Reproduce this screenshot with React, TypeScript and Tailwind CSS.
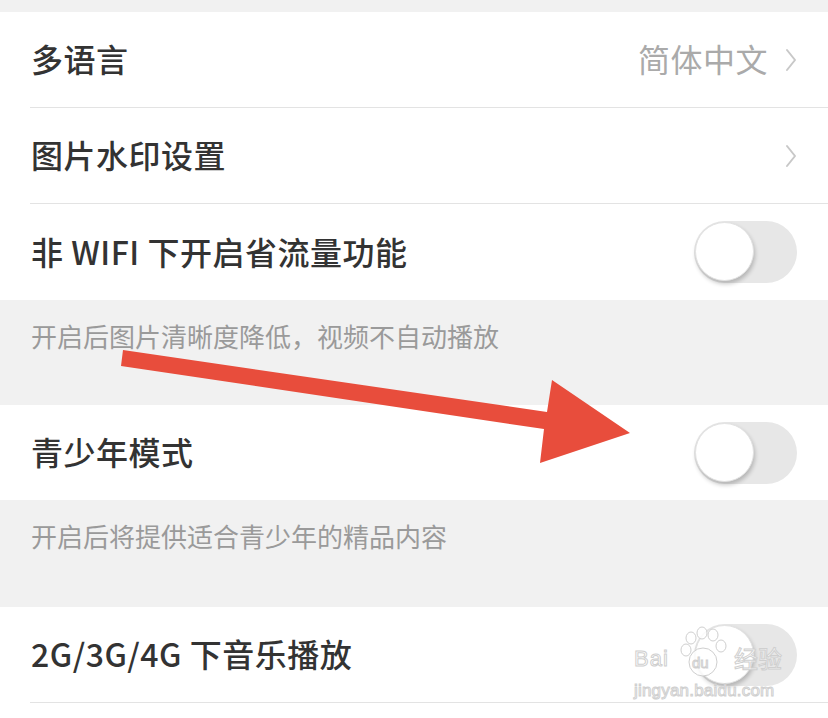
import type { ReactNode } from 'react'

const font = "font-['PingFang_SC','Noto_Sans_CJK_SC','Noto_Sans',sans-serif]"

function Toggle() {
  return (
    <div className="relative h-[62px] w-[103px] rounded-full bg-[#e7e7e7]">
      <div className="absolute left-[1px] top-[1px] h-[59px] w-[59px] rounded-full border border-[#e2e2e2] bg-white shadow-[1px_3px_4px_rgba(0,0,0,0.22)]" />
    </div>
  )
}

function Chevron() {
  return (
    <svg width="12" height="24" viewBox="0 0 12 24" className="ml-[17px]" aria-hidden>
      <path d="M2 2 L10 12 L2 22" fill="none" stroke="#c8c8c8" strokeWidth="2" strokeLinecap="round" strokeLinejoin="round" />
    </svg>
  )
}

// heights include the 1px divider (border-box)
function Row({
  label,
  right,
  divider = true,
  height = 'h-[96px]',
}: {
  label: string
  right?: ReactNode
  divider?: boolean
  height?: string
}) {
  return (
    <div className="bg-white pl-[30px]">
      <div
        className={`flex items-center justify-between pr-[31px] ${height} ${
          divider ? 'border-b border-[#e3e3e3]' : ''
        }`}
      >
        <span className="pb-[3px] pl-[1px] text-[32px] font-medium leading-none tracking-[0.5px] text-[#333333]">
          {label}
        </span>
        {right}
      </div>
    </div>
  )
}

function Hint({ text, height }: { text: string; height: string }) {
  return (
    <div className={`bg-[#f1f1f1] pl-[31px] pt-[19px] ${height}`}>
      <p className="text-[26px] leading-[34px] text-[#9a9a9a]">{text}</p>
    </div>
  )
}

function Watermark() {
  return (
    <svg
      className="pointer-events-none absolute left-[628px] top-[620px]"
      width="160"
      height="82"
      viewBox="0 0 160 82"
      aria-hidden
    >
      <g fill="rgba(255,255,255,0.85)" stroke="#cfcfcf" strokeWidth="1">
        <text x="6" y="46" fontSize="22" fontFamily="Liberation Sans, sans-serif" letterSpacing="1">
          Bai
        </text>
        <ellipse cx="63" cy="18" rx="5" ry="6" />
        <ellipse cx="74" cy="13" rx="5" ry="6" />
        <ellipse cx="85" cy="15" rx="5" ry="6" />
        <ellipse cx="93" cy="26" rx="5" ry="6" />
        <ellipse cx="58" cy="30" rx="5" ry="6" />
        <circle cx="75" cy="42" r="14" />
        <text x="64" y="48" fontSize="15" fontFamily="Liberation Sans, sans-serif">
          du
        </text>
        <text x="106" y="48" fontSize="24" fontFamily="Noto Sans CJK SC, sans-serif">
          经验
        </text>
        <text x="6" y="76" fontSize="17" fontFamily="Liberation Sans, sans-serif" letterSpacing="0.2">
          jingyan.baidu.com
        </text>
      </g>
    </svg>
  )
}

export default function App() {
  return (
    <div className={`relative h-[718px] w-[828px] overflow-hidden bg-white ${font}`}>
      <div className="h-[12px] bg-[#f1f1f1]" />

      <Row
        label="多语言"
        right={
          <div className="flex items-center">
            <span className="pb-[3px] text-[32px] leading-none tracking-[0.5px] text-[#aaaaaa]">简体中文</span>
            <Chevron />
          </div>
        }
      />
      <Row label="图片水印设置" right={<Chevron />} />
      <Row label="非 WIFI 下开启省流量功能" right={<Toggle />} divider={false} />
      <Hint text="开启后图片清晰度降低，视频不自动播放" height="h-[105px]" />

      <Row label="青少年模式" right={<Toggle />} divider={false} height="h-[95px]" />
      <Hint text="开启后将提供适合青少年的精品内容" height="h-[107px]" />

      <Row label="2G/3G/4G 下音乐播放" right={<Toggle />} />

      {/* red annotation arrow */}
      <svg className="pointer-events-none absolute inset-0" width="828" height="718" aria-hidden>
        <polygon
          points="123,350 547,412 552,380 630,433 540,463 544,429 121,366"
          fill="#e84d3c"
        />
      </svg>

      <Watermark />
    </div>
  )
}
